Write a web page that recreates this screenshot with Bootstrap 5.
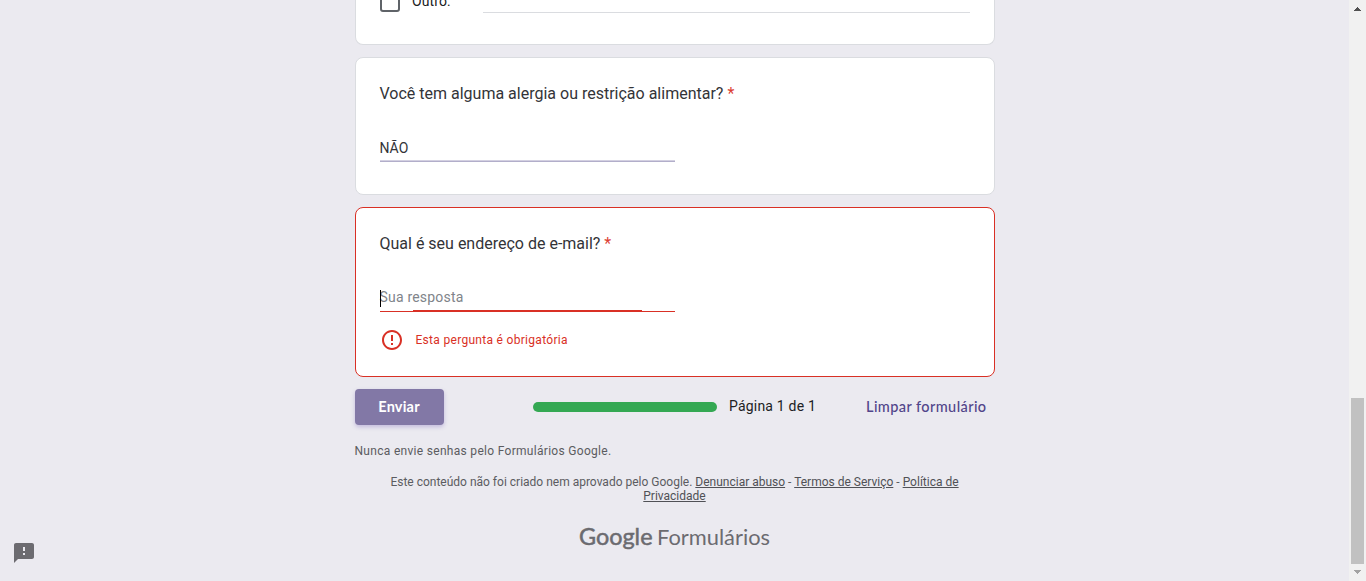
<!DOCTYPE html>
<html lang="pt-BR">
<head>
<meta charset="utf-8">
<meta name="viewport" content="width=device-width, initial-scale=1">
<title>Formulário</title>
<link href="https://cdn.jsdelivr.net/npm/bootstrap@5.3.0/dist/css/bootstrap.min.css" rel="stylesheet">
<style>
  body { background: #ebeaf0; font-family: Roboto, sans-serif; color: #202124; height: 581px; }
  .page { min-width: 0; }
  .form-col { width: 640px; }
  .q-card { background: #fff; border: 1px solid #dadce0; border-radius: 8px; padding: 0 24px; margin-bottom: 12px; }
  .q-card.q-first { height: 45px; border-top: 0; border-radius: 0 0 8px 8px; }
  .q-card.q-text { height: 138px; }
  .q-card.q-error { height: 170px; border-color: #d93025; }
  .other-row { height: 13px; }
  .q-check { width: 20px; height: 20px; border: 2px solid #5f6368; border-radius: 3px; margin-top: -8px; margin-left: .5px; }
  .q-other { font-size: 14px; line-height: 20px; letter-spacing: .1px; margin: -9px 0 0 12px; width: 71px; }
  .q-line { height: 13px; width: 487px; border-bottom: 1px solid #dadce0; }
  .q-title { font-size: 16px; line-height: 24px; padding-top: 24px; color: #333438; }
  .q-star { color: #dc3e34; }
  .q-field { width: 295px; height: 24px; margin-top: 31px; font-size: 14px; line-height: 22px; position: relative; color: #333438; }
  .q-filled::after { content: ""; position: absolute; left: 0; right: 0; bottom: -1px; height: 2px; background: linear-gradient(#d3d0e1 50%, #b2aeca 50%); }
  .q-missing { color: #80848a; letter-spacing: .2px; height: 25px; line-height: 20px; border-bottom: 1px solid #d93025; }
  .q-missing::after { content: ""; position: absolute; left: 33px; width: 229px; bottom: -1px; height: 2px; background: #d93025; }
  .caret { position: absolute; left: 0; top: 3px; width: 1px; height: 17px; background: #000; }
  .q-msg { font-size: 12px; letter-spacing: .3px; color: #d93025; margin-top: 16px; height: 24px; }
  .q-msg svg { margin-right: 12px; }
  .actions { height: 36px; }
  .send { width: 89px; height: 36px; border-radius: 4px; background: #8278a6; color: #fff; font: 700 14.5px/36px Lato, sans-serif; letter-spacing: .2px; padding: 0; border: 0; box-shadow: 0 2px 4px rgba(103,80,180,.3); }
  .send:hover { background: #8278a6; color: #fff; }
  .meter { width: 184px; height: 10px; border-radius: 5px; background: #34a853; margin-left: 89px; }
  .page-no { font-size: 14px; letter-spacing: .2px; line-height: 20px; margin: -2px 0 0 12.5px; width: 137px; }
  .clear-link { color: #51458a; font: 500 14.5px/20px Lato, sans-serif; letter-spacing: .42px; text-decoration: none; white-space: nowrap; }
  .note { font-size: 12px; letter-spacing: .3px; line-height: 16px; color: #5b5c61; padding-top: 2px; }
  .legal { font-size: 12px; line-height: 14px; color: #5b5c61; width: 592px; }
  .legal a { color: #505156; }
  .report { position: absolute; left: 12px; top: 541px; }
  .scroll-rail { width: 17px; background: #f1f1f1; }
</style>
</head>
<body class="d-flex overflow-hidden">
  <main class="page flex-grow-1">
    <div class="form-col mx-auto">
      <section class="q-card q-first">
        <div class="other-row d-flex">
          <span class="q-check flex-shrink-0"></span>
          <span class="q-other flex-shrink-0">Outro:</span>
          <span class="q-line"></span>
        </div>
      </section>
      <section class="q-card q-text">
        <div class="q-title">Você tem alguma alergia ou restrição alimentar? <span class="q-star">*</span></div>
        <div class="q-field q-filled">NÃO</div>
      </section>
      <section class="q-card q-error">
        <div class="q-title">Qual é seu endereço de e-mail? <span class="q-star">*</span></div>
        <div class="q-field q-missing"><span class="caret"></span>Sua resposta</div>
        <div class="q-msg d-flex align-items-center">
          <svg width="24" height="24" viewBox="0 0 24 24" fill="#d93025"><path d="M11 15h2v2h-2zm0-8h2v6h-2zm.99-5C6.47 2 2 6.48 2 12s4.47 10 9.99 10C17.52 22 22 17.52 22 12S17.52 2 11.99 2zM12 20c-4.42 0-8-3.58-8-8s3.58-8 8-8 8 3.58 8 8-3.58 8-8 8z"/></svg>
          <span>Esta pergunta é obrigatória</span>
        </div>
      </section>
      <div class="actions d-flex align-items-center">
        <button class="btn send" type="button">Enviar</button>
        <div class="meter"></div>
        <span class="page-no">Página 1 de 1</span>
        <a class="clear-link" href="#">Limpar formulário</a>
      </div>
      <div class="note mt-3">Nunca envie senhas pelo Formulários Google.</div>
      <div class="legal mx-auto text-center mt-3">Este conteúdo não foi criado nem aprovado pelo Google. <a href="#">Denunciar abuso</a> - <a href="#">Termos de Serviço</a> - <a href="#">Política de Privacidade</a></div>
      <div class="text-center mt-3">
        <svg class="d-block mx-auto overflow-visible" width="192" height="36" viewBox="0 0 192 36" fill="#6b6b70" font-family="Lato, sans-serif" font-size="23">
          <text x="0" y="26" textLength="73.500" lengthAdjust="spacingAndGlyphs" stroke="#6b6b70" stroke-width=".5">Google</text>
          <text x="78" y="26" font-size="22" textLength="113" lengthAdjust="spacingAndGlyphs">Formulários</text>
        </svg>
      </div>
    </div>
    <svg class="report" width="24" height="24" viewBox="0 0 24 24" fill="#6c6b70"><path d="M20 2H4c-1.100 0-1.990.9-1.990 2L2 22l4-4h14c1.100 0 2-.9 2-2V4c0-1.100-.9-2-2-2zm-7 12h-2v-2h2v2zm0-4h-2V6h2v4z"/></svg>
  </main>
  <svg class="scroll-rail flex-shrink-0" width="17" height="581" viewBox="0 0 17 581" shape-rendering="crispEdges">
    <path d="M5 11V10h1V9h1V8h1V7h1v1h1v1h1v1h1v1z" fill="#505050"/>
    <path d="M2 398h13v166H2z" fill="#c1c1c1"/>
    <path d="M5 570h7v1h-1v1h-1v1H9v1H8v-1H7v-1H6v-1H5z" fill="#a3a3a3"/>
  </svg>
<script src="https://cdn.jsdelivr.net/npm/bootstrap@5.3.0/dist/js/bootstrap.bundle.min.js"></script>
</body>
</html>
